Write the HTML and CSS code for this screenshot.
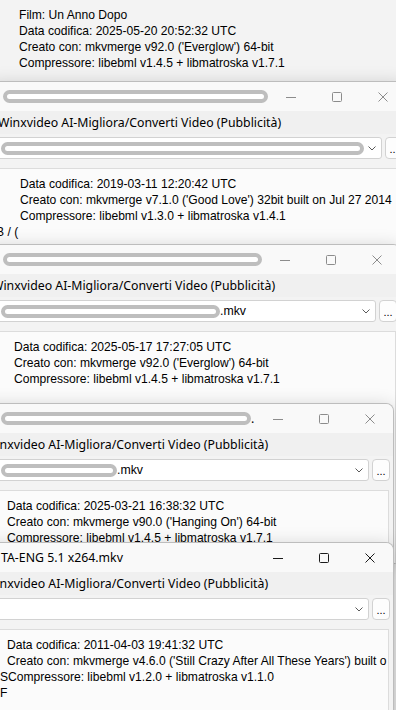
FILE: index.html
```html
<!DOCTYPE html>
<html lang="it">

<head>
    <meta charset="utf-8">
    <meta name="viewport" content="width=device-width, initial-scale=1.0">
    <title>MediaInfo</title>
    <link rel="stylesheet" href="styles.css">
</head>

<body>

    <div class="desktop">

        <!-- finestra A: si vede solo il fondo del pannello -->
        <div class="win win-a">
            <div class="panel">
                <div class="line">Film: Un Anno Dopo</div>
                <div class="line">Data codifica: 2025-05-20 20:52:32 UTC</div>
                <div class="line">Creato con: mkvmerge v92.0 ('Everglow') 64-bit</div>
                <div class="line">Compressore: libebml v1.4.5 + libmatroska v1.7.1</div>
            </div>
        </div>

        <!-- finestra B -->
        <div class="win win-b">
            <div class="titlebar">
                <div class="title"><span class="redact"></span></div>
                <div class="caption">
                    <span class="cbtn"><svg width="10" height="10" viewBox="0 0 10 10"><path d="M0 5.5h10" stroke="currentColor"/></svg></span>
                    <span class="cbtn"><svg width="10" height="10" viewBox="0 0 10 10"><rect x="0.5" y="0.5" width="9" height="9" rx="1" fill="none" stroke="currentColor"/></svg></span>
                    <span class="cbtn"><svg width="10" height="10" viewBox="0 0 10 10"><path d="M0.5 0.5l9 9M9.5 0.5l-9 9" stroke="currentColor"/></svg></span>
                </div>
            </div>
            <div class="menubar">Winxvideo AI-Migliora/Converti Video (Pubblicità)</div>
            <div class="toolbar">
                <div class="combo"><span class="combo-text"><span class="redact"></span></span><svg class="chev" width="8" height="5" viewBox="0 0 8 5"><path d="M0.5 0.5l3.5 3.5 3.5-3.5" fill="none" stroke="currentColor"/></svg></div>
                <button class="dots">...</button>
            </div>
            <div class="panel">
                <div class="line">Data codifica: 2019-03-11 12:20:42 UTC</div>
                <div class="line">Creato con: mkvmerge v7.1.0 ('Good Love') 32bit built on Jul 27 2014</div>
                <div class="line">Compressore: libebml v1.3.0 + libmatroska v1.4.1</div>
                <div class="line stray-b">B / (</div>
            </div>
        </div>

        <!-- finestra C -->
        <div class="win win-c">
            <div class="titlebar">
                <div class="title"><span class="redact"></span></div>
                <div class="caption">
                    <span class="cbtn"><svg width="10" height="10" viewBox="0 0 10 10"><path d="M0 5.5h10" stroke="currentColor"/></svg></span>
                    <span class="cbtn"><svg width="10" height="10" viewBox="0 0 10 10"><rect x="0.5" y="0.5" width="9" height="9" rx="1" fill="none" stroke="currentColor"/></svg></span>
                    <span class="cbtn"><svg width="10" height="10" viewBox="0 0 10 10"><path d="M0.5 0.5l9 9M9.5 0.5l-9 9" stroke="currentColor"/></svg></span>
                </div>
            </div>
            <div class="menubar">Winxvideo AI-Migliora/Converti Video (Pubblicità)</div>
            <div class="toolbar">
                <div class="combo"><span class="combo-text"><span class="redact"></span>.mkv</span><svg class="chev" width="8" height="5" viewBox="0 0 8 5"><path d="M0.5 0.5l3.5 3.5 3.5-3.5" fill="none" stroke="currentColor"/></svg></div>
                <button class="dots">...</button>
            </div>
            <div class="panel">
                <div class="line">Data codifica: 2025-05-17 17:27:05 UTC</div>
                <div class="line">Creato con: mkvmerge v92.0 ('Everglow') 64-bit</div>
                <div class="line">Compressore: libebml v1.4.5 + libmatroska v1.7.1</div>
            </div>
        </div>

        <!-- finestra D -->
        <div class="win win-d">
            <div class="titlebar">
                <div class="title"><span class="redact"></span>.</div>
                <div class="caption">
                    <span class="cbtn"><svg width="10" height="10" viewBox="0 0 10 10"><path d="M0 5.5h10" stroke="currentColor"/></svg></span>
                    <span class="cbtn"><svg width="10" height="10" viewBox="0 0 10 10"><rect x="0.5" y="0.5" width="9" height="9" rx="1" fill="none" stroke="currentColor"/></svg></span>
                    <span class="cbtn"><svg width="10" height="10" viewBox="0 0 10 10"><path d="M0.5 0.5l9 9M9.5 0.5l-9 9" stroke="currentColor"/></svg></span>
                </div>
            </div>
            <div class="menubar">Winxvideo AI-Migliora/Converti Video (Pubblicità)</div>
            <div class="toolbar">
                <div class="combo"><span class="combo-text"><span class="redact"></span>.mkv</span><svg class="chev" width="8" height="5" viewBox="0 0 8 5"><path d="M0.5 0.5l3.5 3.5 3.5-3.5" fill="none" stroke="currentColor"/></svg></div>
                <button class="dots">...</button>
            </div>
            <div class="panel">
                <div class="line">Data codifica: 2025-03-21 16:38:32 UTC</div>
                <div class="line">Creato con: mkvmerge v90.0 ('Hanging On') 64-bit</div>
                <div class="line">Compressore: libebml v1.4.5 + libmatroska v1.7.1</div>
            </div>
        </div>

        <!-- finestra E (attiva) -->
        <div class="win win-e">
            <div class="titlebar">
                <div class="title">TA-ENG 5.1 x264.mkv</div>
                <div class="caption">
                    <span class="cbtn"><svg width="10" height="10" viewBox="0 0 10 10"><path d="M0 5.5h10" stroke="currentColor"/></svg></span>
                    <span class="cbtn"><svg width="10" height="10" viewBox="0 0 10 10"><rect x="0.5" y="0.5" width="9" height="9" rx="1" fill="none" stroke="currentColor"/></svg></span>
                    <span class="cbtn"><svg width="10" height="10" viewBox="0 0 10 10"><path d="M0.5 0.5l9 9M9.5 0.5l-9 9" stroke="currentColor"/></svg></span>
                </div>
            </div>
            <div class="menubar">Winxvideo AI-Migliora/Converti Video (Pubblicità)</div>
            <div class="toolbar">
                <div class="combo"><span class="combo-text"></span><svg class="chev" width="8" height="5" viewBox="0 0 8 5"><path d="M0.5 0.5l3.5 3.5 3.5-3.5" fill="none" stroke="currentColor"/></svg></div>
                <button class="dots">...</button>
            </div>
            <div class="panel">
                <div class="line">Data codifica: 2011-04-03 19:41:32 UTC</div>
                <div class="line">Creato con: mkvmerge v4.6.0 ('Still Crazy After All These Years') built o</div>
                <div class="line stray">SCompressore: libebml v1.2.0 + libmatroska v1.1.0</div>
                <div class="line stray">F</div>
            </div>
        </div>

    </div>

</body>

</html>
```

FILE: styles.css
```css
* {
    box-sizing: border-box;
}

body {
    margin: 0;
    padding: 0;
    background-color: #f3f3f3;
    font-family: "Noto Sans", "Open Sans", sans-serif;
    color: #000;
}

.desktop {
    position: relative;
    width: 396px;
    height: 710px;
    overflow: hidden;
}

/* finestre sovrapposte */
.win {
    position: absolute;
    width: 420px;
    height: 320px;
    display: flex;
    flex-direction: column;
    background-color: #f3f3f3;
    border: 1px solid rgba(0, 0, 0, 0.22);
    border-radius: 8px;
    box-shadow: 0 2px 18px rgba(0, 0, 0, 0.16);
    overflow: hidden;
}

.win-a { top: -20px; left: -13px; --lx: 13px; }
.win-b { top: 81px;  left: -13px; --lx: 13px; }
.win-c { top: 244px; left: -19px; --lx: 19px; }
.win-d { top: 403px; left: -26px; --lx: 26px; }
.win-e { top: 542px; left: -26px; --lx: 26px; }

.win-a .panel {
    padding-top: 26px;
    border: 0;
    background-color: #f3f3f3;
}

.titlebar {
    display: flex;
    align-items: center;
    height: 29px;
    flex-shrink: 0;
    background-color: #f9f9f9;
}

.title {
    flex: 1;
    display: flex;
    align-items: center;
    padding-left: calc(var(--lx) + 2px);
    font-size: 12.3px;
    white-space: nowrap;
    overflow: hidden;
}

.win-d .title { padding-left: var(--lx); }
.win-e .title { padding-left: var(--lx); }

.caption {
    display: flex;
    height: 100%;
}

.cbtn {
    width: 46px;
    display: flex;
    align-items: center;
    justify-content: center;
    color: #8c8c8c;
}

.win-e .cbtn {
    color: #1b1b1b;
}

/* bande di censura disegnate sopra i nomi */
.redact {
    display: inline-block;
    height: 13px;
    border: 4px solid #bebebe;
    border-radius: 7px;
    background-color: #fff;
}

.win-b .title .redact { width: 268px; }
.win-c .title .redact { width: 266px; }
.win-d .title .redact { width: 250px; }

.menubar {
    height: 23px;
    flex-shrink: 0;
    padding-left: 10px;
    font-size: 12.3px;
    line-height: 23px;
    white-space: nowrap;
    background-color: #f0f0f0;
}

.toolbar {
    display: flex;
    gap: 3px;
    height: 34px;
    flex-shrink: 0;
    padding: 3px 3px 9px 3px;
}

.combo {
    flex: 1;
    display: flex;
    align-items: center;
    height: 22px;
    background-color: #fff;
    border: 1px solid #d2d2d2;
    border-radius: 3px;
    padding-right: 4px;
    overflow: hidden;
}

.combo-text {
    flex: 1;
    display: flex;
    align-items: center;
    padding-left: calc(var(--lx) - 4px);
    font-family: "Liberation Sans", Arial, sans-serif;
    font-size: 12.3px;
    white-space: nowrap;
}

.win-b .combo-text .redact { width: 363px; }
.win-c .combo-text .redact { width: 219px; }
.win-d .combo-text .redact { width: 116px; }

.chev {
    color: #5a5a5a;
    margin-right: 1px;
}

.dots {
    width: 18px;
    height: 22px;
    padding: 0 0 3px 0;
    border: 1px solid #d2d2d2;
    border-radius: 4px;
    background-color: #fdfdfd;
    font-family: "Liberation Sans", Arial, sans-serif;
    font-size: 11px;
    line-height: 1;
    display: flex;
    align-items: flex-end;
    justify-content: center;
}

.panel {
    flex: 1;
    margin: 0 4px 0 0;
    padding: 7px 0 0 31px;
    background-color: #fbfbfb;
    border: 1px solid #dcdcdc;
    border-bottom: 0;
    font-family: "Liberation Sans", Arial, sans-serif;
    font-size: 12.1px;
    line-height: 16px;
    white-space: nowrap;
    overflow: hidden;
}

.line {
    height: 16px;
}

.stray {
    margin-left: -7px;
}

.stray-b {
    margin-left: -24px;
}
```
